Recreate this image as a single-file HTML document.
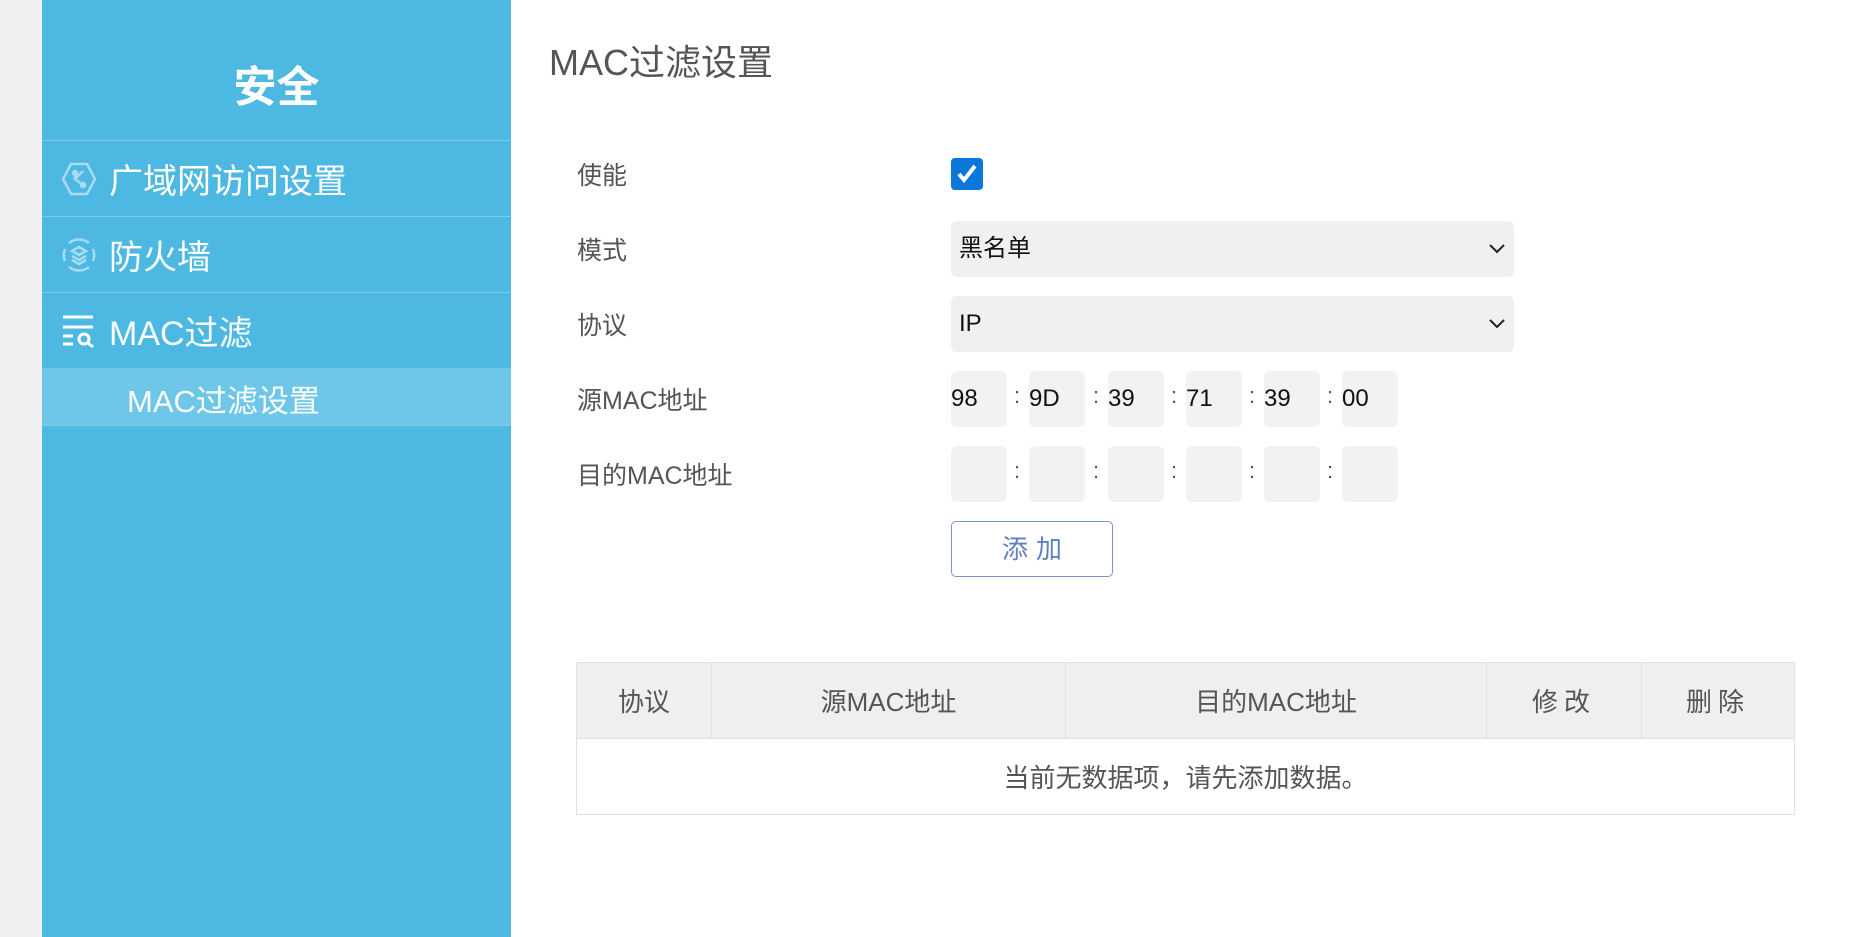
<!DOCTYPE html>
<html><head><meta charset="utf-8"><style>
*{margin:0;padding:0;box-sizing:border-box}
body{width:1864px;height:937px;background:#fff;position:relative;overflow:hidden;font-family:"Liberation Sans","Noto Sans CJK SC",sans-serif;color:#555}
.abs{position:absolute}
.gut{left:0;top:0;width:42px;height:937px;background:#f0f0f0}
.side{left:42px;top:0;width:469px;height:937px;background:#4db8e2}
.sep{left:42px;width:469px;height:1px;background:#7ccbea}
.item{left:42px;width:469px;color:#fff;font-size:34px;display:flex;align-items:center}
.lbl{left:577px;font-size:25px;color:#555;line-height:30px}
.sel{left:951px;width:563px;height:56px;background:#f0f0f0;border-radius:6px;font-size:24px;color:#111;padding-left:8px;line-height:56px}
.box{width:56px;height:56px;background:#f2f2f2;border-radius:6px;font-size:24px;color:#111;line-height:56px}
.col{font-size:22px;color:#555;line-height:56px}
th,td{font-weight:normal}
</style></head><body>
<div class="abs gut"></div>
<div class="abs side"></div>
<div class="abs" style="left:42px;top:53px;width:469px;text-align:center;color:#fff;font-size:43px;font-weight:bold">安全</div>
<div class="abs sep" style="top:140px"></div>
<div class="abs sep" style="top:216px"></div>
<div class="abs sep" style="top:292px"></div>
<div class="abs" style="left:42px;top:368px;width:469px;height:57px;background:#6ec6e8"></div>
<div class="abs sep" style="top:425px"></div>
<div class="abs item" style="top:141px;height:75px">
<svg style="margin-left:19px" width="36" height="36" viewBox="0 0 36 36" fill="none" stroke="#a9dcf2" stroke-width="2.5"><path d="M10 3h16l8 15-8 15H10L2 18z"/><circle cx="14" cy="12" r="2" fill="#a9dcf2"/><circle cx="22" cy="24" r="2" fill="#a9dcf2"/><path d="M22 10l-8 8 8 6M14 12v6"/></svg>
<span style="margin-left:12px">广域网访问设置</span></div>
<div class="abs item" style="top:217px;height:75px">
<svg style="margin-left:19px" width="36" height="36" viewBox="0 0 36 36" fill="none" stroke="#a9dcf2" stroke-width="2.5"><path d="M8 6a16 16 0 0 1 20 0M8 30a16 16 0 0 0 20 0M4 12a16 16 0 0 0 0 12M32 12a16 16 0 0 1 0 12"/><path d="M11 14l7-4 7 4-7 4z M11 19l7 4 7-4M11 23l7 4 7-4"/></svg>
<span style="margin-left:12px">防火墙</span></div>
<div class="abs item" style="top:293px;height:75px">
<svg style="margin-left:20px" width="34" height="34" viewBox="0 0 34 34" fill="none" stroke="#fff" stroke-width="3"><path d="M1 3h30M1 13h30M1 22h10M1 30h10"/><circle cx="22" cy="25" r="5"/><path d="M26 29l5 4"/></svg>
<span style="margin-left:13px">MAC过滤</span></div>
<div class="abs" style="left:127px;top:376px;color:#fff;font-size:31px">MAC过滤设置</div>

<div class="abs" style="left:549px;top:34px;font-size:36px;color:#555">MAC过滤设置</div>
<div class="abs lbl" style="top:161px">使能</div>
<div class="abs lbl" style="top:236px">模式</div>
<div class="abs lbl" style="top:311px">协议</div>
<div class="abs lbl" style="top:386px">源MAC地址</div>
<div class="abs lbl" style="top:461px">目的MAC地址</div>

<div class="abs" style="left:951px;top:158px;width:32px;height:32px;background:#0b77d8;border-radius:4px">
<svg width="32" height="32" viewBox="0 0 32 32"><path d="M8 16l5 6 11-14" stroke="#fff" stroke-width="4" fill="none"/></svg></div>
<div class="abs sel" style="top:221px">黑名单<span style="position:absolute;right:8px;top:0">
<svg width="18" height="56" viewBox="0 0 18 56"><path d="M2 24l7 7 7-7" stroke="#222" stroke-width="2" fill="none"/></svg></span></div>
<div class="abs sel" style="top:296px">IP<span style="position:absolute;right:8px;top:0">
<svg width="18" height="56" viewBox="0 0 18 56"><path d="M2 24l7 7 7-7" stroke="#222" stroke-width="2" fill="none"/></svg></span></div>

<div class="abs box" style="left:951px;top:371px">98</div>
<div class="abs box" style="left:1029px;top:371px">9D</div>
<div class="abs box" style="left:1108px;top:371px">39</div>
<div class="abs box" style="left:1186px;top:371px">71</div>
<div class="abs box" style="left:1264px;top:371px">39</div>
<div class="abs box" style="left:1342px;top:371px">00</div>
<div class="abs col" style="left:1014px;top:368px">:</div>
<div class="abs col" style="left:1093px;top:368px">:</div>
<div class="abs col" style="left:1171px;top:368px">:</div>
<div class="abs col" style="left:1249px;top:368px">:</div>
<div class="abs col" style="left:1327px;top:368px">:</div>

<div class="abs box" style="left:951px;top:446px"></div>
<div class="abs box" style="left:1029px;top:446px"></div>
<div class="abs box" style="left:1108px;top:446px"></div>
<div class="abs box" style="left:1186px;top:446px"></div>
<div class="abs box" style="left:1264px;top:446px"></div>
<div class="abs box" style="left:1342px;top:446px"></div>
<div class="abs col" style="left:1014px;top:443px">:</div>
<div class="abs col" style="left:1093px;top:443px">:</div>
<div class="abs col" style="left:1171px;top:443px">:</div>
<div class="abs col" style="left:1249px;top:443px">:</div>
<div class="abs col" style="left:1327px;top:443px">:</div>

<div class="abs" style="left:951px;top:521px;width:162px;height:56px;border:1px solid #7a95c9;border-radius:5px;color:#5e7fc0;font-size:26px;text-align:center;line-height:54px;letter-spacing:8px;padding-left:8px">添加</div>

<table class="abs" style="left:576px;top:662px;width:1219px;border-collapse:collapse;font-size:26px;color:#555">
<tr style="background:#efefef;height:76px">
<th style="width:135px;border:1px solid #e2e2e2">协议</th>
<th style="width:354px;border:1px solid #e2e2e2">源MAC地址</th>
<th style="width:421px;border:1px solid #e2e2e2">目的MAC地址</th>
<th style="width:155px;border:1px solid #e2e2e2;letter-spacing:6px">修改</th>
<th style="border:1px solid #e2e2e2;letter-spacing:6px">删除</th></tr>
<tr style="height:76px"><td colspan="5" style="text-align:center;border:1px solid #e2e2e2">当前无数据项，请先添加数据。</td></tr>
</table>
</body></html>
